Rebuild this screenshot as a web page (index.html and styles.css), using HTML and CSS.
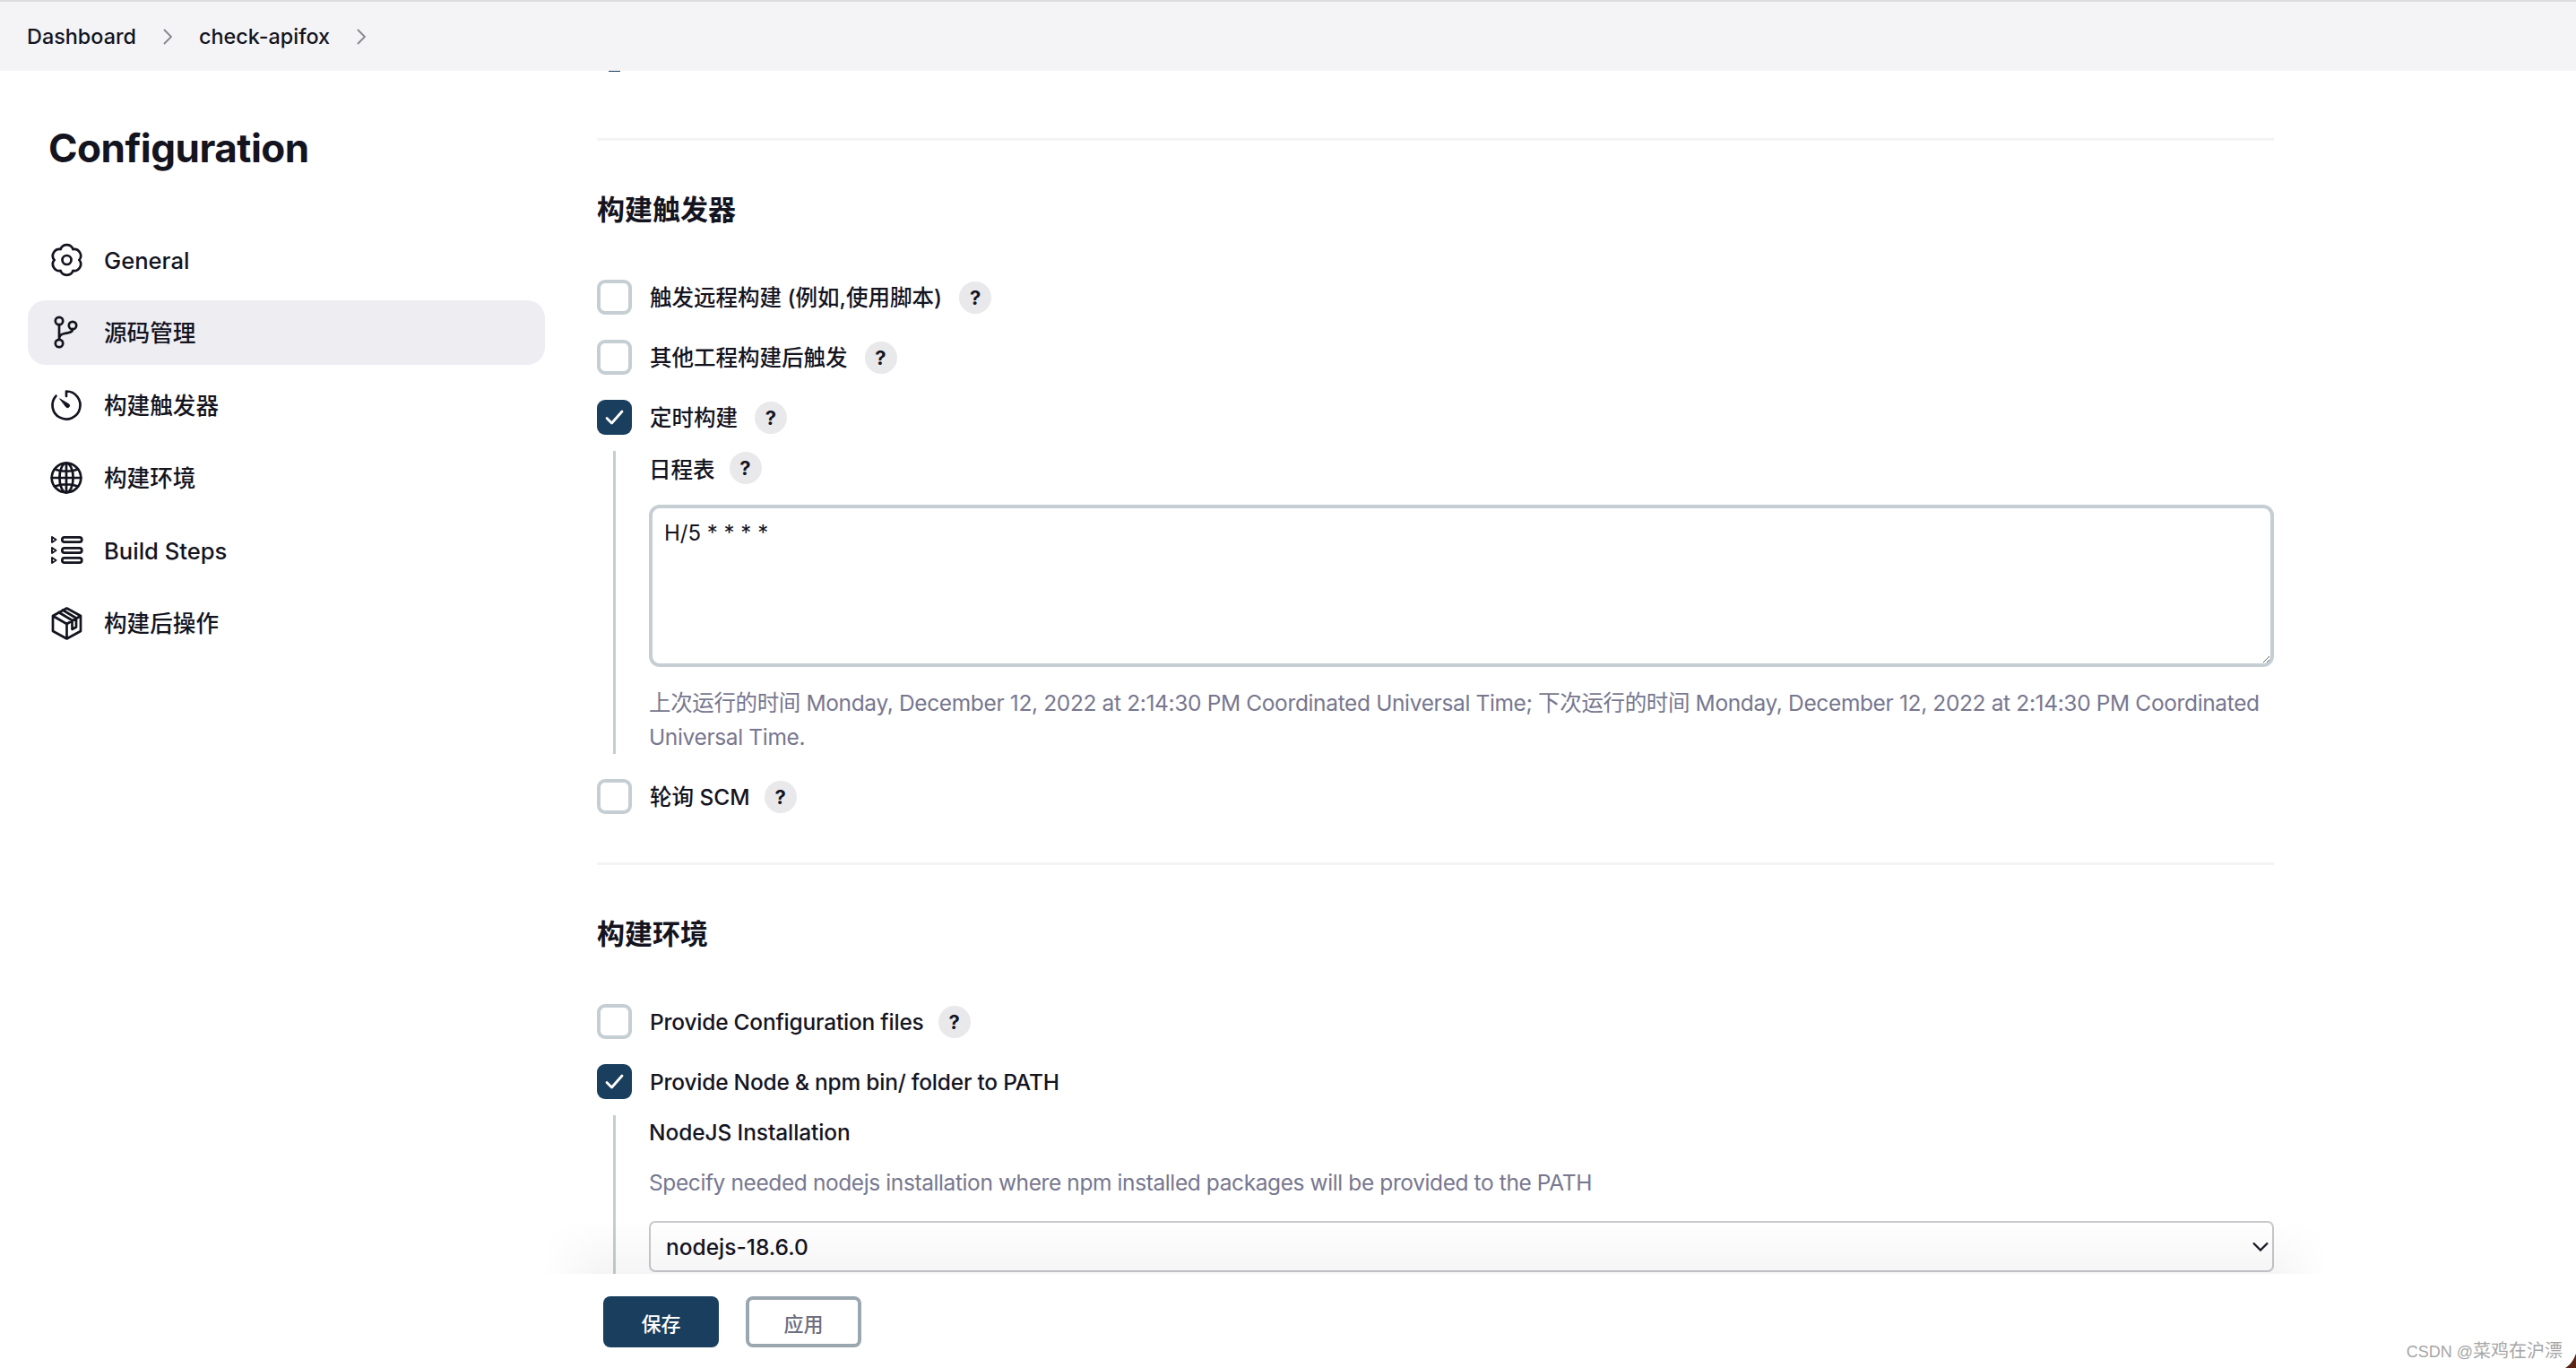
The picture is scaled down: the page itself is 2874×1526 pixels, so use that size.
FILE: index.html
```html
<!DOCTYPE html>
<html lang="zh">
<head>
<meta charset="utf-8">
<title>Configuration</title>
<link rel="stylesheet" href="styles.css">
</head>
<body>
<div class="page">
  <header class="topbar">
    <span class="crumb">Dashboard</span>
    <svg class="crumb-sep" viewBox="0 0 10 18"><path d="M1 1l8 8-8 8"/></svg>
    <span class="crumb">check-apifox</span>
    <svg class="crumb-sep" viewBox="0 0 10 18"><path d="M1 1l8 8-8 8"/></svg>
  </header>
  <div class="workspace">
    <aside class="sidebar">
      <h1 class="title">Configuration</h1>
      <nav class="nav">
        <a class="nav-item">
          <svg class="nav-icon" viewBox="0 0 38 38">
            <g transform="translate(19.5 19)">
              <path d="M-7-12.12C-4.5-18.4 4.5-18.4 7-12.12"/>
              <path transform="rotate(60)" d="M-7-12.12C-4.5-18.4 4.5-18.4 7-12.12"/>
              <path transform="rotate(120)" d="M-7-12.12C-4.5-18.4 4.5-18.4 7-12.12"/>
              <path transform="rotate(180)" d="M-7-12.12C-4.5-18.4 4.5-18.4 7-12.12"/>
              <path transform="rotate(240)" d="M-7-12.12C-4.5-18.4 4.5-18.4 7-12.12"/>
              <path transform="rotate(300)" d="M-7-12.12C-4.5-18.4 4.5-18.4 7-12.12"/>
              <circle r="5"/>
            </g>
          </svg>
          <span>General</span>
        </a>
        <a class="nav-item active">
          <svg class="nav-icon" viewBox="0 0 38 38">
            <circle cx="11" cy="6" r="4.2"/><circle cx="26" cy="11" r="4.2"/><circle cx="11" cy="31" r="4.2"/>
            <path d="M11 10.2V26.8M11 26.5C11 22 13 21 17 20C22 19 26 19 26 15.2"/>
          </svg>
          <span class="cjk">源码管理</span>
        </a>
        <a class="nav-item">
          <svg class="nav-icon" viewBox="0 0 38 38">
            <path d="M19 9V3.5A15.5 15.5 0 1 1 7.5 8.6"/>
            <path class="solid" d="M12 12L22 18a2.2 2.2 0 0 1-3 3.2Z"/>
          </svg>
          <span class="cjk">构建触发器</span>
        </a>
        <a class="nav-item">
          <svg class="nav-icon" viewBox="0 0 38 38">
            <circle cx="19" cy="19" r="16.3"/>
            <ellipse cx="19" cy="19" rx="7.6" ry="16.3"/>
            <path d="M19 2.7V35.3M2.7 19H35.3M6 9.5Q19 14 32 9.5M6 28.5Q19 24 32 28.5"/>
          </svg>
          <span class="cjk">构建环境</span>
        </a>
        <a class="nav-item">
          <svg class="nav-icon" viewBox="0 0 38 38">
            <rect x="14.3" y="4.3" width="22" height="5.4" rx="2.7"/>
            <rect x="14.3" y="16.3" width="22" height="5.4" rx="2.7"/>
            <rect x="14.3" y="27.3" width="22" height="5.4" rx="2.7"/>
            <path class="thin" d="M3 4L7.5 7L3 10ZM3 16L7.5 19L3 22ZM3 27L7.5 30L3 33Z"/>
          </svg>
          <span>Build Steps</span>
        </a>
        <a class="nav-item">
          <svg class="nav-icon" viewBox="0 0 38 38">
            <path d="M19.5 2.5L35 11V28L19.5 36.5L4 28V11ZM4 11L19.5 20L35 11M19.5 20V36.5M10.5 7L25.5 16V26L30 23.5V13.5L15 4.5"/>
          </svg>
          <span class="cjk">构建后操作</span>
        </a>
      </nav>
    </aside>
    <main class="main">
      <div class="scroller">
        <div class="peek"></div>
        <section class="section">
          <hr class="rule">
          <h2 class="section-title">构建触发器</h2>
          <div class="row">
            <span class="check"></span><span class="label">触发远程构建 (例如,使用脚本)</span><span class="help">?</span>
          </div>
          <div class="row">
            <span class="check"></span><span class="label">其他工程构建后触发</span><span class="help">?</span>
          </div>
          <div class="row open">
            <span class="check on"><svg viewBox="0 0 39 39"><path d="M11 20.5L16.5 26L28 13"/></svg></span><span class="label">定时构建</span><span class="help">?</span>
          </div>
          <div class="nested">
            <div class="field-label"><span>日程表</span><span class="help tight">?</span></div>
            <textarea class="textarea" readonly>H/5 * * * *</textarea>
            <p class="hint spaced">上次运行的时间 Monday, December 12, 2022 at 2:14:30 PM Coordinated Universal Time; 下次运行的时间 Monday, December 12, 2022 at 2:14:30 PM Coordinated Universal Time.</p>
          </div>
          <div class="row">
            <span class="check"></span><span class="label">轮询 SCM</span><span class="help tight">?</span>
          </div>
        </section>
        <section class="section later">
          <hr class="rule">
          <h2 class="section-title">构建环境</h2>
          <div class="row">
            <span class="check"></span><span class="label latin">Provide Configuration files</span><span class="help tight">?</span>
          </div>
          <div class="row open">
            <span class="check on"><svg viewBox="0 0 39 39"><path d="M11 20.5L16.5 26L28 13"/></svg></span><span class="label latin">Provide Node &amp; npm bin/ folder to PATH</span>
          </div>
          <div class="nested">
            <div class="plain-label">NodeJS Installation</div>
            <p class="hint">Specify needed nodejs installation where npm installed packages will be provided to the PATH</p>
            <div class="select-wrap">
              <select class="select"><option>nodejs-18.6.0</option></select>
              <svg class="select-arrow" viewBox="0 0 18 11"><path d="M1 1.5L9 9.5L17 1.5"/></svg>
            </div>
          </div>
        </section>
      </div>
      <footer class="actions">
        <button class="btn primary">保存</button>
        <button class="btn outline">应用</button>
      </footer>
    </main>
  </div>
  <div class="watermark"><span class="wm-latin">CSDN @</span>菜鸡在沪漂</div>
  <svg class="corner" viewBox="0 0 12 16"><path d="M12 0C9 8 5 13 0 16H12Z"/></svg>
</div>
</body>
</html>
```

FILE: styles.css
```css
* { box-sizing: border-box; }
html, body { margin: 0; height: 100%; }
body {
  background: #fff;
  color: #14141f;
  font-family: Inter, "Noto Sans CJK SC", sans-serif;
  font-size: 24.5px;
  font-weight: 500;
  overflow: hidden;
}
.page { position: relative; display: flex; flex-direction: column; height: 1526px; }

.topbar {
  display: flex;
  align-items: center;
  height: 79px;
  flex: none;
  padding-left: 30px;
  gap: 30px;
  background: #f4f4f6;
  border-top: 2px solid #dcdcdf;
}
.crumb { font-size: 23.4px; }
.crumb-sep { width: 10px; height: 18px; fill: none; stroke: #85858c; stroke-width: 1.8; }

.workspace { display: flex; flex: 1; min-height: 0; }

.sidebar { width: 666px; flex: none; padding-left: 31px; }
.title {
  margin: 57px 0 60px 23px;
  font-size: 44px;
  line-height: 58px;
  font-weight: 700;
  letter-spacing: -0.5px;
}
.nav { display: flex; flex-direction: column; gap: 9px; width: 577px; }
.nav-item {
  display: flex;
  align-items: center;
  gap: 23px;
  height: 72px;
  padding-left: 24px;
  border-radius: 20px;
  font-size: 25.6px;
}
.nav-item .cjk { padding-bottom: 3px; }
.nav-item.active { background: #ededf2; }
.nav-icon { width: 38px; height: 38px; flex: none; fill: none; stroke: #14141f; stroke-width: 2.7; stroke-linecap: round; stroke-linejoin: round; }
.nav-icon .solid { fill: #14141f; stroke-width: 1; }
.nav-icon .thin { stroke-width: 1.9; }

.main { width: 1871px; flex: none; display: flex; flex-direction: column; min-height: 0; }
.scroller { flex: 1; min-height: 0; overflow: hidden; }
.peek { width: 13px; height: 1px; margin-left: 13px; background: #1a3e5e; }

.section { display: flex; flex-direction: column; padding-top: 74px; }
.section.later { padding-top: 26px; }
.rule { width: 100%; height: 3px; margin: 0; border: 0; background: #f4f4f6; }
.section-title {
  margin: 0;
  padding-top: 55px;
  height: 155px;
  font-size: 31px;
  line-height: 44px;
  font-weight: 600;
}
.row { display: flex; align-items: center; height: 39px; margin-bottom: 28px; }
.row.open { margin-bottom: 18px; }
.check {
  width: 39px;
  height: 39px;
  flex: none;
  margin-right: 20px;
  border: 4px solid #c5ced3;
  border-radius: 9px;
  background: #fff;
}
.check.on { border: 0; background: #1a3e5e; }
.check.on svg { display: block; width: 39px; height: 39px; fill: none; stroke: #fff; stroke-width: 2.8; stroke-linecap: round; stroke-linejoin: round; }
.label { line-height: 36px; }
.label.latin { letter-spacing: -0.22px; }
.help {
  display: flex;
  align-items: center;
  justify-content: center;
  width: 36px;
  height: 36px;
  flex: none;
  margin-left: 19px;
  border-radius: 50%;
  background: #e9e9ec;
  font-size: 22px;
  font-weight: 700;
}
.help.tight { margin-left: 16px; }

.nested {
  display: flex;
  flex-direction: column;
  margin-left: 18px;
  margin-bottom: 28px;
  padding-left: 37px;
  border-left: 3px solid #c5ced3;
}
.field-label { display: flex; align-items: center; height: 36px; margin-top: 1px; }
.textarea {
  display: block;
  width: 100%;
  height: 181px;
  margin-top: 23px;
  padding: 13px;
  border: 4px solid #c5ced3;
  border-radius: 12px;
  background: #fff;
  color: #14141f;
  font: 400 24px/30px Inter, "Noto Sans CJK SC", sans-serif;
  outline: none;
}
.hint { margin: 0; color: #77778f; font-weight: 400; font-size: 24.5px; line-height: 38px; letter-spacing: -0.36px; }
.hint.spaced { margin-top: 21px; }
.plain-label { line-height: 38px; letter-spacing: -0.1px; }
.nested .hint:not(.spaced) { margin-top: 18px; letter-spacing: -0.4px; }

.select-wrap { position: relative; margin-top: 24px; margin-bottom: 20px; }
.select {
  display: block;
  width: 100%;
  height: 57px;
  padding: 0 17px;
  border: 2px solid #c8c8cc;
  border-radius: 7px;
  background: #fff;
  color: #14141f;
  font: 500 24.5px Inter, "Noto Sans CJK SC", sans-serif;
  appearance: none;
  -webkit-appearance: none;
}
.select-arrow { position: absolute; right: 6px; top: 23px; width: 18px; height: 11px; fill: none; stroke: #1e1e2b; stroke-width: 2.4; }

.actions {
  position: relative;
  display: flex;
  flex: none;
  gap: 30px;
  height: 105px;
  padding: 25px 0 0 7px;
  background: #fff;
}
.actions::before {
  content: "";
  position: absolute;
  left: -60px;
  right: -60px;
  top: -60px;
  height: 60px;
  background: linear-gradient(to bottom, rgba(0,0,0,0), rgba(0,0,0,.04));
  -webkit-mask-image: linear-gradient(to right, transparent, #000 60px, #000 calc(100% - 60px), transparent);
  mask-image: linear-gradient(to right, transparent, #000 60px, #000 calc(100% - 60px), transparent);
  pointer-events: none;
}
.btn {
  width: 129px;
  height: 57px;
  border-radius: 8px;
  font: 500 22px Inter, "Noto Sans CJK SC", sans-serif;
}
.btn.primary { border: 0; background: #1a3e5e; color: #fff; }
.btn.outline { border: 4px solid #9ba7af; background: #fff; color: #6d6f80; }

.watermark {
  position: absolute;
  right: 15px;
  bottom: 4px;
  color: #a6a6a6;
  font-family: "Liberation Sans", "Noto Sans CJK SC", sans-serif;
  font-size: 20px;
  font-weight: 400;
  line-height: 28px;
}
.wm-latin { font-size: 18px; }
.corner { position: absolute; right: 0; bottom: 0; width: 12px; height: 16px; fill: #5a2414; }
```
